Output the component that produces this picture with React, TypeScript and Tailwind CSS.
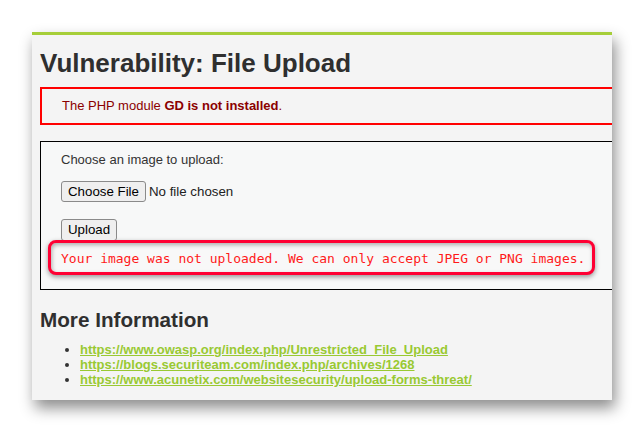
import React from 'react';

const links = [
  'https://www.owasp.org/index.php/Unrestricted_File_Upload',
  'https://blogs.securiteam.com/index.php/archives/1268',
  'https://www.acunetix.com/websitesecurity/upload-forms-threat/',
];

export default function App() {
  return (
    <div className="w-[644px] h-[433px] bg-white pt-[32px] pl-[32px] overflow-hidden font-['Liberation_Sans',Arial,sans-serif]">
      <div className="w-[580px] h-[368px] bg-[#f4f4f4] border-t-[3px] border-[#a6ce39] overflow-hidden shadow-[3px_8px_14px_rgba(0,0,0,0.45)] pl-[8px]">
        <h1 className="text-[26px] font-bold text-[#2f2f2f] leading-[30px] mt-[13px]">
          Vulnerability: File Upload
        </h1>

        <div className="w-[600px] mt-[9px] border-2 border-[#ff0000] px-[20px] py-[10px] text-[13px] leading-[14px] text-[#8b0000]">
          The PHP module <b>GD is not installed</b>.
        </div>

        <div className="w-[600px] mt-[16px] h-[149px] border border-black bg-[#f7f8f8] pl-[20px] pt-[10px] text-[13px] text-[#333]">
          <p className="leading-[16px]">Choose an image to upload:</p>
          <div className="mt-[13px] flex items-center gap-[3px]">
            <button className="h-[21px] px-[6px] bg-[#efefef] border border-[#8a8a8a] rounded-[3px] text-[13.3px] text-black leading-none">
              Choose File
            </button>
            <span className="text-[13.3px] text-[#222]">No file chosen</span>
          </div>
          <div className="mt-[17px] h-[21px] overflow-hidden">
            <button className="h-[22px] px-[6px] bg-[#efefef] border border-[#8a8a8a] rounded-[3px] text-[13.3px] text-black leading-none">
              Upload
            </button>
          </div>
          <div className="-ml-[13px] w-[547px] h-[35px] rounded-[8px] border-[3px] border-[#ff0033] bg-[#f8f8f8] shadow-[inset_1px_2px_4px_rgba(0,0,0,0.3),0_2px_5px_rgba(0,0,0,0.4)] flex items-center pl-[10px] pt-[1px]">
            <pre className="font-['DejaVu_Sans_Mono',monospace] text-[13px] text-[#ff1a1a] leading-none">
              Your image was not uploaded. We can only accept JPEG or PNG images.
            </pre>
          </div>
        </div>

        <h2 className="text-[20.7px] font-bold text-[#2f2f2f] leading-[24px] mt-[18px]">More Information</h2>
        <ul className="mt-[10px] pl-[40px] list-disc text-[13px] leading-[15px] marker:text-[#333]">
          {links.map((l) => (
            <li key={l}>
              <a className="font-bold underline text-[#99c932]" href="#">
                {l}
              </a>
            </li>
          ))}
        </ul>
      </div>
    </div>
  );
}
